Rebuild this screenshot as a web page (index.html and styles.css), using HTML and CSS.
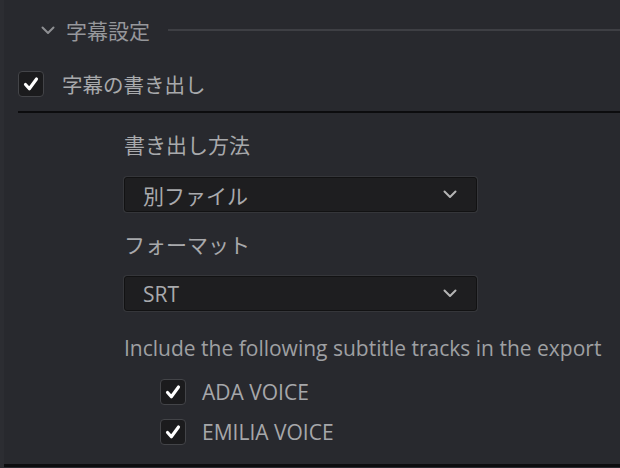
FILE: index.html
```html
<!DOCTYPE html>
<html lang="ja">
<head>
  <meta charset="UTF-8">
  <meta name="viewport" content="width=device-width, initial-scale=1.0">
  <title>字幕設定</title>
  <link rel="stylesheet" href="styles.css">
</head>
<body>
  <div class="panel">
    <div class="section-head">
      <svg class="caret" width="14" height="9" viewBox="0 0 14 9"><path d="M1.5 1.5 L7 7 L12.5 1.5" fill="none" stroke="#8e8f93" stroke-width="2" stroke-linecap="round" stroke-linejoin="round"/></svg>
      <span class="section-title">字幕設定</span>
      <span class="section-rule"></span>
    </div>

    <label class="check-row export-row">
      <span class="box"><svg viewBox="0 0 24 24"><path d="M6 12.5 L10.2 17.2 L18 6.5" fill="none" stroke="#fff" stroke-width="3.4" stroke-linecap="round" stroke-linejoin="round"/></svg></span>
      <span class="check-text">字幕の書き出し</span>
    </label>

    <div class="divider"></div>

    <div class="options">
      <div class="label first">書き出し方法</div>
      <div class="select">
        <span>別ファイル</span>
        <svg width="14" height="9" viewBox="0 0 14 9"><path d="M1.5 1.5 L7 7 L12.5 1.5" fill="none" stroke="#b5b5b5" stroke-width="2" stroke-linecap="round" stroke-linejoin="round"/></svg>
      </div>

      <div class="label">フォーマット</div>
      <div class="select">
        <span class="latin">SRT</span>
        <svg width="14" height="9" viewBox="0 0 14 9"><path d="M1.5 1.5 L7 7 L12.5 1.5" fill="none" stroke="#b5b5b5" stroke-width="2" stroke-linecap="round" stroke-linejoin="round"/></svg>
      </div>

      <div class="note">Include the following subtitle tracks in the export</div>

      <div class="tracks">
        <label class="check-row">
          <span class="box"><svg viewBox="0 0 24 24"><path d="M6 12.5 L10.2 17.2 L18 6.5" fill="none" stroke="#fff" stroke-width="3.4" stroke-linecap="round" stroke-linejoin="round"/></svg></span>
          <span class="track-text">ADA VOICE</span>
        </label>
        <label class="check-row">
          <span class="box"><svg viewBox="0 0 24 24"><path d="M6 12.5 L10.2 17.2 L18 6.5" fill="none" stroke="#fff" stroke-width="3.4" stroke-linecap="round" stroke-linejoin="round"/></svg></span>
          <span class="track-text">EMILIA VOICE</span>
        </label>
      </div>
    </div>

    <div class="bottom-rule"></div>
  </div>
</body>
</html>
```

FILE: styles.css
```css
body { margin: 0; background: #28292e; font-family: "Open Sans", "Noto Sans CJK JP", sans-serif; color: #a9aaad; }
.panel { height: 468px; border-left: 4px solid #2c2d32; box-sizing: border-box; overflow: hidden; }

.section-head { display: flex; align-items: center; height: 20px; margin-top: 20px; padding-left: 37px; }
.caret { display: block; }
.section-title { margin-left: 11px; font-family: "Noto Sans CJK JP", sans-serif; font-size: 21px; line-height: 20px; color: #96979b; }
.section-rule { flex: 1; height: 2px; margin-left: 18px; background: #3e3f44; }

.check-row { display: flex; align-items: center; }
.export-row { margin-top: 31px; padding-left: 14px; }
.box { width: 24px; height: 24px; border: 1px solid #434448; border-radius: 4px; background: #1b1b1d; display: flex; align-items: center; justify-content: center; }
.box svg { width: 22px; height: 22px; }
.check-text { margin-left: 18px; font-family: "Noto Sans CJK JP", sans-serif; font-size: 20.5px; line-height: 26px; color: #a8a9ac; }

.divider { height: 2px; margin-top: 14px; margin-left: 14px; background: #0c0c0e; box-shadow: 0 -4px 0 -2px #2b2c31; }

.options { padding-left: 120px; }
.label { margin-top: 19px; font-family: "Noto Sans CJK JP", sans-serif; font-size: 21px; line-height: 26px; color: #a8a9ac; }
.label.first { margin-top: 18px; }
.select { width: 353px; height: 35px; margin-top: 19px; border: 1px solid #121213; border-radius: 3px; background: #1e1e20; box-shadow: 0 0 0 1px #35363a; display: flex; align-items: center; justify-content: space-between; padding: 0 19px 0 18px; box-sizing: border-box; }
.label.first + .select { margin-top: 20px; }
.select span { font-family: "Noto Sans CJK JP", sans-serif; font-size: 21px; line-height: 26px; color: #a9aaad; }
.select .latin { font-family: "Open Sans", sans-serif; }

.note { margin-top: 24px; font-size: 21px; line-height: 26px; color: #9fa0a3; white-space: nowrap; }
.tracks { margin-top: 18px; padding-left: 36px; display: flex; flex-direction: column; gap: 14px; }
.track-text { margin-left: 16px; font-size: 21px; line-height: 26px; color: #a6a7aa; }

.bottom-rule { height: 3px; margin-top: 19px; margin-left: -4px; background: #0c0c0e; }
```
